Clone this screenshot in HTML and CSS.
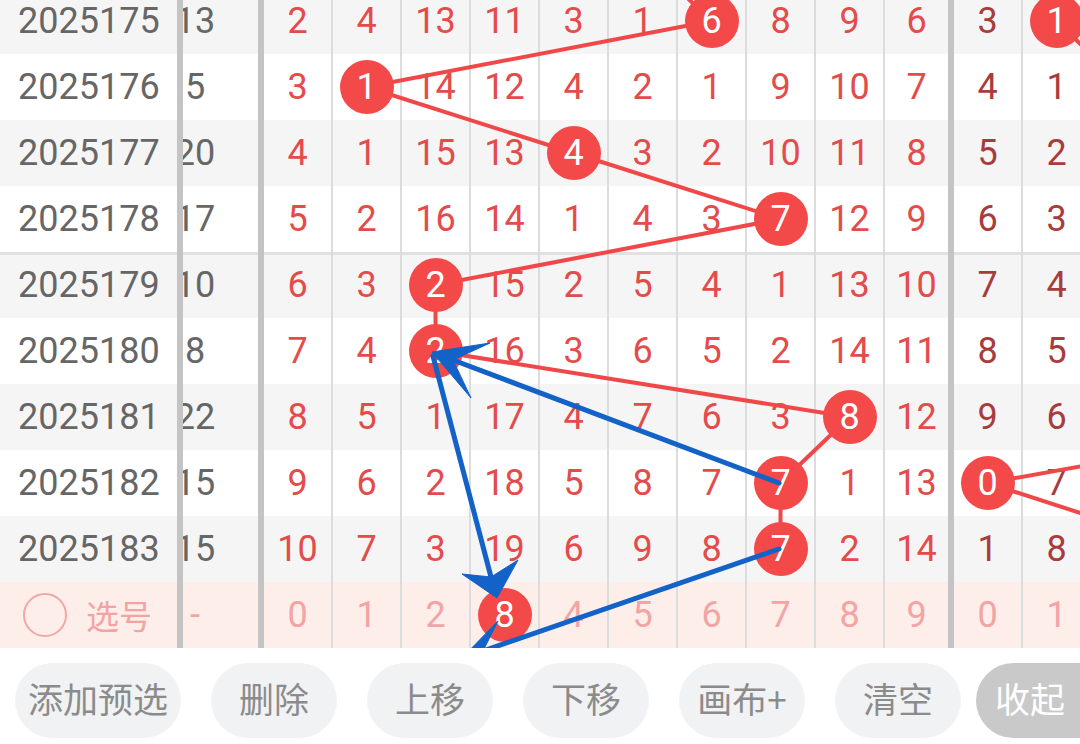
FILE: index.html
```html
<!DOCTYPE html>
<html lang="zh-CN">
<head>
<meta charset="utf-8">
<title>走势图</title>
<link rel="stylesheet" href="styles.css">
</head>
<body>
<div class="app">
  <div class="board">
    <div class="rows">
      <div class="row alt">
        <div class="cell issue">2025175</div>
        <div class="cell sum"><div class="clip"><span>13</span></div></div>
        <div class="cell">2</div><div class="cell">4</div><div class="cell">13</div><div class="cell">11</div><div class="cell">3</div>
        <div class="cell">1</div><div class="cell"><span class="ball">6</span></div><div class="cell">8</div><div class="cell">9</div><div class="cell sep">6</div>
        <div class="cell dark">3</div><div class="cell dark"><span class="ball">1</span></div>
      </div>
      <div class="row">
        <div class="cell issue">2025176</div>
        <div class="cell sum"><div class="clip"><span>5</span></div></div>
        <div class="cell">3</div><div class="cell"><span class="ball">1</span></div><div class="cell">14</div><div class="cell">12</div><div class="cell">4</div>
        <div class="cell">2</div><div class="cell">1</div><div class="cell">9</div><div class="cell">10</div><div class="cell sep">7</div>
        <div class="cell dark">4</div><div class="cell dark">1</div>
      </div>
      <div class="row alt">
        <div class="cell issue">2025177</div>
        <div class="cell sum"><div class="clip"><span>20</span></div></div>
        <div class="cell">4</div><div class="cell">1</div><div class="cell">15</div><div class="cell">13</div><div class="cell"><span class="ball">4</span></div>
        <div class="cell">3</div><div class="cell">2</div><div class="cell">10</div><div class="cell">11</div><div class="cell sep">8</div>
        <div class="cell dark">5</div><div class="cell dark">2</div>
      </div>
      <div class="row">
        <div class="cell issue">2025178</div>
        <div class="cell sum"><div class="clip"><span>17</span></div></div>
        <div class="cell">5</div><div class="cell">2</div><div class="cell">16</div><div class="cell">14</div><div class="cell">1</div>
        <div class="cell">4</div><div class="cell">3</div><div class="cell"><span class="ball">7</span></div><div class="cell">12</div><div class="cell sep">9</div>
        <div class="cell dark">6</div><div class="cell dark">3</div>
      </div>
      <div class="row alt grp">
        <div class="cell issue">2025179</div>
        <div class="cell sum"><div class="clip"><span>10</span></div></div>
        <div class="cell">6</div><div class="cell">3</div><div class="cell"><span class="ball">2</span></div><div class="cell">15</div><div class="cell">2</div>
        <div class="cell">5</div><div class="cell">4</div><div class="cell">1</div><div class="cell">13</div><div class="cell sep">10</div>
        <div class="cell dark">7</div><div class="cell dark">4</div>
      </div>
      <div class="row">
        <div class="cell issue">2025180</div>
        <div class="cell sum"><div class="clip"><span>8</span></div></div>
        <div class="cell">7</div><div class="cell">4</div><div class="cell"><span class="ball">2</span></div><div class="cell">16</div><div class="cell">3</div>
        <div class="cell">6</div><div class="cell">5</div><div class="cell">2</div><div class="cell">14</div><div class="cell sep">11</div>
        <div class="cell dark">8</div><div class="cell dark">5</div>
      </div>
      <div class="row alt">
        <div class="cell issue">2025181</div>
        <div class="cell sum"><div class="clip"><span>22</span></div></div>
        <div class="cell">8</div><div class="cell">5</div><div class="cell">1</div><div class="cell">17</div><div class="cell">4</div>
        <div class="cell">7</div><div class="cell">6</div><div class="cell">3</div><div class="cell"><span class="ball">8</span></div><div class="cell sep">12</div>
        <div class="cell dark">9</div><div class="cell dark">6</div>
      </div>
      <div class="row">
        <div class="cell issue">2025182</div>
        <div class="cell sum"><div class="clip"><span>15</span></div></div>
        <div class="cell">9</div><div class="cell">6</div><div class="cell">2</div><div class="cell">18</div><div class="cell">5</div>
        <div class="cell">8</div><div class="cell">7</div><div class="cell"><span class="ball">7</span></div><div class="cell">1</div><div class="cell sep">13</div>
        <div class="cell dark"><span class="ball">0</span></div><div class="cell dark">7</div>
      </div>
      <div class="row alt">
        <div class="cell issue">2025183</div>
        <div class="cell sum"><div class="clip"><span>15</span></div></div>
        <div class="cell">10</div><div class="cell">7</div><div class="cell">3</div><div class="cell">19</div><div class="cell">6</div>
        <div class="cell">9</div><div class="cell">8</div><div class="cell"><span class="ball">7</span></div><div class="cell">2</div><div class="cell sep">14</div>
        <div class="cell dark">1</div><div class="cell dark">8</div>
      </div>
      <div class="row pick">
        <div class="cell issue"><span class="radio"></span><span class="pick-label">选号</span></div>
        <div class="cell sum"><div class="clip"><span>-</span></div></div>
        <div class="cell">0</div><div class="cell">1</div><div class="cell">2</div><div class="cell"><span class="ball">8</span></div><div class="cell">4</div>
        <div class="cell">5</div><div class="cell">6</div><div class="cell">7</div><div class="cell">8</div><div class="cell sep">9</div>
        <div class="cell">0</div><div class="cell">1</div>
      </div>
    </div>

    <svg class="lines" width="1080" height="648" viewBox="0 0 1080 648">
      <polyline points="642.5,-45 711.5,21 366.5,87 573.5,153 780.5,219 435.5,285 435.5,351 849.5,417 780.5,483 780.5,549" />
      <line x1="1056.5" y1="21" x2="1125" y2="87" />
      <line x1="987.5" y1="483" x2="1167" y2="451" />
      <line x1="987.5" y1="483" x2="1170" y2="542" />
    </svg>

    <svg class="arrows" width="1080" height="648" viewBox="0 0 1080 648">
      <line x1="779" y1="483" x2="453" y2="360" />
      <polygon points="432,352 490,343 453,360 471,398" />
      <line x1="433" y1="356" x2="491" y2="577" />
      <polygon points="497,598 462,574 491,577 518,560" />
      <line x1="779" y1="549" x2="483" y2="651" />
      <polygon points="462,658 498,621 483,651 515,668" />
    </svg>
  </div>

  <div class="toolbar">
    <div class="btn">添加预选</div>
    <div class="btn">删除</div>
    <div class="btn">上移</div>
    <div class="btn">下移</div>
    <div class="btn">画布+</div>
    <div class="btn">清空</div>
    <div class="btn fold">收起</div>
  </div>
</div>
</body>
</html>
```

FILE: styles.css
```css
html, body {
  margin: 0;
  padding: 0;
  background: #ffffff;
}

body {
  width: 1080px;
  height: 744px;
  overflow: hidden;
  font-family: Roboto, "Noto Sans CJK SC", sans-serif;
}

.app {
  width: 1080px;
  height: 744px;
  display: flex;
  flex-direction: column;
}

.board {
  position: relative;
  height: 648px;
  overflow: hidden;
  flex-shrink: 0;
}

.rows {
  margin-top: -12px;
}

.row {
  display: flex;
  width: 1092px;
  height: 66px;
  background: #ffffff;
}

.row.alt {
  background: #f5f5f5;
}

.row.grp {
  box-shadow: inset 0 3px 0 #e1e1e1;
}

.row.pick {
  background: #fdeeea;
}

.cell {
  box-sizing: border-box;
  flex-shrink: 0;
  width: 69px;
  height: 66px;
  display: flex;
  align-items: center;
  justify-content: center;
  border-right: 2px solid #dcdcdc;
  font-size: 36px;
  color: #e44b4b;
  line-height: 1;
}

.cell.sep {
  border-right: 6px solid #c4c4c4;
}

.cell.dark {
  color: #a83c3c;
}

.cell.issue {
  width: 183px;
  justify-content: flex-start;
  padding-left: 18px;
  border-right: 6px solid #c4c4c4;
  color: #666666;
}

.cell.sum {
  width: 81px;
  justify-content: flex-start;
  overflow: hidden;
  border-right: 6px solid #c4c4c4;
  color: #666666;
}

.clip {
  width: 24px;
  flex-shrink: 0;
  display: flex;
  justify-content: center;
  white-space: nowrap;
}

.row.pick .cell {
  color: #f3a4a4;
}

.radio {
  box-sizing: border-box;
  width: 44px;
  height: 44px;
  margin-left: 5px;
  margin-right: 19px;
  border: 2px solid #f2a6a6;
  border-radius: 50%;
  flex-shrink: 0;
}

.pick-label {
  font-family: "Noto Sans CJK SC", sans-serif;
  font-size: 33px;
  color: #f2a4a4;
}

.ball {
  position: relative;
  z-index: 2;
  width: 54px;
  height: 54px;
  border-radius: 50%;
  background: #f44949;
  color: #ffffff;
  display: flex;
  align-items: center;
  justify-content: center;
  flex-shrink: 0;
}

.row.pick .cell .ball {
  color: #ffffff;
}

.lines,
.arrows {
  position: absolute;
  left: 0;
  top: 0;
  overflow: hidden;
  pointer-events: none;
}

.lines {
  z-index: 1;
}

.lines polyline,
.lines line {
  fill: none;
  stroke: #f04848;
  stroke-width: 4;
  stroke-linejoin: round;
}

.arrows {
  z-index: 3;
}

.arrows line {
  stroke: #1262c7;
  stroke-width: 5;
  stroke-linecap: round;
}

.arrows polygon {
  fill: #1262c7;
  stroke: #1262c7;
  stroke-width: 1;
  stroke-linejoin: round;
}

.toolbar {
  box-sizing: border-box;
  height: 96px;
  display: flex;
  gap: 30px;
  padding: 15px 0 0 15px;
  overflow: hidden;
  white-space: nowrap;
}

.btn {
  box-sizing: border-box;
  flex-shrink: 0;
  height: 75px;
  min-width: 126px;
  padding: 0 13px 6px;
  border-radius: 38px;
  background: #f1f2f4;
  color: #8b8b8b;
  font-family: "Noto Sans CJK SC", sans-serif;
  font-size: 35px;
  display: flex;
  align-items: center;
  justify-content: center;
}

.btn.fold {
  margin-left: -15px;
  min-width: 140px;
  justify-content: flex-start;
  padding-left: 19px;
  background: #c9c9c9;
  color: #ffffff;
}
```
